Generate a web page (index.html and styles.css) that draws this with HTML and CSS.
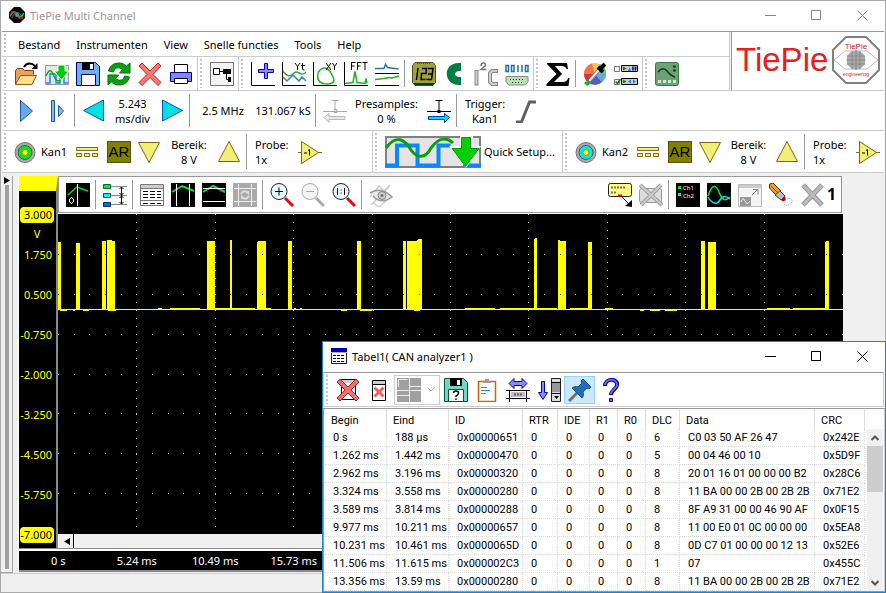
FILE: index.html
```
<!DOCTYPE html>
<html lang="nl">
<head>
    <meta charset="UTF-8">
    <title>TiePie Multi Channel</title>
    <link rel="stylesheet" href="styles.css">
</head>
<body>

<!-- icons that are used more than once -->
<svg class="defs" width="0" height="0">
    <symbol id="i-min" viewBox="0 0 11 11"><path d="M0 5.500h11" stroke="currentColor" fill="none"/></symbol>
    <symbol id="i-max" viewBox="0 0 11 11"><path d="M.5 .5h9v9h-9z" stroke="currentColor" fill="none"/></symbol>
    <symbol id="i-close" viewBox="0 0 11 11"><path d="M.5 .5l10 10M10.500 .5l-10 10" stroke="currentColor" fill="none"/></symbol>
    <symbol id="i-dc" viewBox="0 0 24 24"><path d="M.5 7.500h21v3h-21zM.5 13.500h5v3h-5zM8.500 13.500h5v3h-5zM16.500 13.500h5v3h-5z" fill="#f0f080" stroke="#8a6410"/></symbol>
    <symbol id="i-down" viewBox="0 0 24 24"><path d="M.5 2.500h21l-10.500 20z" fill="#f0f078" stroke="#8a6410"/></symbol>
    <symbol id="i-up" viewBox="0 0 24 24"><path d="M1.500 21.500h21l-10.500-20z" fill="#f0f078" stroke="#8a6410"/></symbol>
    <symbol id="i-gain" viewBox="0 0 24 24"><path d="M0 12.500h24" stroke="#8a6410"/><path d="M3.500 1.500v22l17-11z" fill="#f0f078" stroke="#8a6410"/><path d="M6 13h3M11.500 9.500v6M10 10.500l1.500-1" fill="none" stroke="#000"/></symbol>
</svg>

<div class="window">
    <div class="titlebar">
        <svg class="app_icon" viewBox="0 0 16 16"><path d="M5 0h6l5 5v6l-5 5h-6l-5-5v-6z"/><path d="M1 9c3-5 5-5 7-2s4 4 7-1" fill="none" stroke="#0c3" stroke-width="1.500"/><path d="M2 5h4l4 6h4" fill="none" stroke="#e22" stroke-width="1.500"/><path d="M3 11c2-6 7-8 10-1" fill="none" stroke="#09c"/><circle cx="8" cy="8" r="2" fill="#888"/></svg>
        <h1>TiePie Multi Channel</h1>
        <div class="controls">
            <button aria-label="Minimaliseren"><svg><use href="#i-min"/></svg></button>
            <button aria-label="Maximaliseren"><svg><use href="#i-max"/></svg></button>
            <button aria-label="Sluiten"><svg><use href="#i-close"/></svg></button>
        </div>
    </div>

    <div class="head">
        <div class="head_left">
            <div class="menu">
                <i class="grip"></i>
                <button>Bestand</button><button>Instrumenten</button><button>View</button><button>Snelle functies</button><button>Tools</button><button>Help</button>
            </div>

            <div class="bar bar_main">
                <div class="band">
                    <i class="grip"></i>
                    <button class="tool" aria-label="Openen"><svg viewBox="0 0 24 24"><path d="M1.500 22V8.500l2-2h5l2 2h9v4" fill="#e8a060" stroke="#804010"/><path d="M1.500 22.500l5-9h16l-4.500 9z" fill="#ffe090" stroke="#a05810"/><path d="M10 5c3-5 8-4 11-1" fill="none" stroke="#000" stroke-width="2"/><path d="M23.500 1v6h-6z"/></svg></button>
                    <button class="tool" aria-label="Snelle opstelling"><svg viewBox="0 0 24 24"><path d="M.5 3.500h23v19h-23z" fill="#e6e6e6" stroke="#999"/><path d="M1 21h4v-9h6v9h4v-6h4v6h4" fill="none" stroke="#1888ff" stroke-width="1.500"/><path d="M1 14c3-7 5-7 8 0s6 6 9 0" fill="none" stroke="#0a0" stroke-width="1.500"/><path d="M13 3h7v6h4l-7.500 9-7.500-9h4z" fill="#0c0" stroke="#fff"/></svg></button>
                    <button class="tool" aria-label="Opslaan"><svg viewBox="0 0 24 24"><path d="M.5 .5h19l4 4v19h-23z" fill="#6caef8" stroke="#000060"/><path d="M6 0h12v8h-12z"/><path d="M14 2h3v5h-3z" fill="#fff"/><path d="M5.500 12.500h14v11h-14z" fill="#fff" stroke="#000060"/></svg></button>
                    <button class="tool" aria-label="Vernieuwen"><svg viewBox="0 0 24 24"><g fill="#08a010" stroke="#067008"><path d="M1.500 9c2-9 13-10 18-5l3.500-3v10h-10.500l3-3.500c-4-3-8-2-9 2.500z"/><path d="M22.500 15c-2 9-13 10-18 5l-3.500 3v-10h10.500l-3 3.500c4 3 8 2 9-2.500z"/></g></svg></button>
                    <button class="tool" aria-label="Verwijderen"><svg viewBox="0 0 24 24"><path d="M4 1l8 8 8-8 3 3-8 8.500 8 8-3 3-8-8-8 8-3-3 8-8-8-8.500z" fill="#f87878" stroke="#c02020"/></svg></button>
                    <button class="tool" aria-label="Afdrukken"><svg viewBox="0 0 24 24"><path d="M5.500 2.500h13v8h-13z" fill="#fff" stroke="#000"/><path d="M1.500 10.500h21v9h-21z" fill="#8484f8" stroke="#000080"/><path d="M5.500 16.500h13v5h-13z" fill="#fff" stroke="#000"/></svg></button>
                </div>
                <div class="band">
                    <i class="grip"></i>
                    <button class="tool" aria-label="Objecten"><svg viewBox="0 0 24 24"><path d="M.5 .5h23v23h-23z" fill="#f4f4f4" stroke="#777"/><path d="M3.500 6.500h6v6h-6z" fill="#fff" stroke="#000"/><path d="M10 9.500h4M16.500 10v7.500h2" fill="none" stroke="#000"/><path d="M13 7h8v5h-8zM18 15h3v5h-3z"/></svg></button>
                </div>
                <div class="band">
                    <i class="grip"></i>
                    <button class="tool" aria-label="Nieuwe grafiek"><svg viewBox="0 0 24 24"><path d="M.5 0v23.500h23.500" fill="none" stroke="#000"/><path d="M13.500 1.500h3v6h6v3h-6v6h-3v-6h-6v-3h6z" fill="#88f" stroke="#00c"/></svg></button>
                    <button class="tool" aria-label="Yt grafiek"><svg viewBox="0 0 24 24"><path d="M.5 0v23.500h23.500" fill="none" stroke="#000"/><path d="M1 9c4 6 7 6 11 2s7 5 12-1" fill="none" stroke="#3a3" stroke-width="1.500"/><path d="M1 15l4 4 6-6 6 6 3-4 4 4" fill="none" stroke="#3a80d0" stroke-width="1.500"/><path d="M13 1l2.500 3.500L18 1M15.500 4v4M20.500 1v6q0 1 2 1M19 3.500h4" fill="none" stroke="#000"/></svg></button>
                    <button class="tool" aria-label="XY grafiek"><svg viewBox="0 0 24 24"><path d="M.5 0v23.500h23.500" fill="none" stroke="#000"/><path d="M7 8c5-4 9-1 11 3s5 8 1 10-11 1-13-2-2-8 1-11z" fill="none" stroke="#1cb41c" stroke-width="1.500"/><path d="M13 1l5 7M18 1l-5 7M19.500 1l2 3.500L24 1M21.500 4v4" fill="none" stroke="#000"/></svg></button>
                    <button class="tool" aria-label="FFT grafiek"><svg viewBox="0 0 24 24"><path d="M.5 0v23.500h23.500" fill="none" stroke="#000"/><path d="M1 21.500l8-1 2-11 2 11 8 1 1-5 1 5" fill="none" stroke="#1cb41c" stroke-width="1.500"/><path d="M7.500 8V.5h4M7.500 4h3M13.500 8V.5h4M13.500 4h3M18.500 .5h5M21 .5V8" fill="none" stroke="#000"/></svg></button>
                    <button class="tool" aria-label="Meerdere grafieken"><svg viewBox="0 0 24 24"><path d="M0 11.500h24M0 23.500h24" stroke="#000"/><path d="M0 6.500h9l1.500-4 2 3 11 1.500" fill="none" stroke="#2878b8" stroke-width="1.500"/><path d="M0 17.500l9-1 5-1 3 .5 7-2" fill="none" stroke="#1cb41c" stroke-width="1.500"/></svg></button>
                    <i class="sep"></i>
                    <button class="tool" aria-label="Meter"><svg viewBox="0 0 24 24"><path d="M3 .5h18l2.500 3v17l-2.500 3h-18l-2.500-3v-17z" fill="#a0a03c" stroke="#505018"/><path d="M2 21h20v2h-20z" fill="#004020"/><path d="M5 1.500h14" stroke="#3848c0" stroke-dasharray="1 1"/><path d="M6 6l-1.500 12M10 6.500h4.500l-.5 5h-4.500l-.5 6h4.500M16 6.500h5l-1.500 11h-5M16 12h4" fill="none" stroke="#000" stroke-width="1.500"/></svg></button>
                    <button class="tool" aria-label="CAN"><svg viewBox="0 0 24 24"><path d="M18 1c-20-2-18 24 0 22v-8c-8 1-8-7 0-6z" fill="#007c48"/></svg></button>
                    <button class="tool" aria-label="I2C"><svg viewBox="0 0 24 24"><g fill="none"><path d="M2.500 8v15.500" stroke="#888" stroke-width="4"/><path d="M2.500 9v13.500" stroke="#ccc" stroke-width="2"/><path d="M24 9h-6l-2 2v9l2 2h6" stroke="#888" stroke-width="4"/><path d="M23 9h-5l-2 2v9l2 2h5" stroke="#ccc" stroke-width="2"/><path d="M7 4c0-4 5-4 4.500-.5L7 7.500h5.500" stroke="#777" stroke-width="1.500"/></g></svg></button>
                    <button class="tool" aria-label="Serieel"><svg viewBox="0 0 24 24"><g fill="none" stroke="#1870b0" stroke-width="1.500"><path d="M1 3.500h2.500v6H1zM6.500 3.500H9v6H6.500zM13 3v7M17 3v7M20.500 3.500H23v6h-2.500z"/></g><path d="M1 14.500h22v5l-2.500 3.500h-17l-2.500-3.500z" fill="#b8e0b0" stroke="#888"/><path d="M5 17.500h15M7 20.500h12" stroke="#222" stroke-dasharray="1 2"/></svg></button>
                </div>
                <div class="band">
                    <i class="grip"></i>
                    <button class="tool" aria-label="Som"><svg viewBox="0 0 24 24"><path d="M1 1h20l1 6h-1.500q-1-3-5-3h-6.500l7 8-8 8h8.500q5 0 5.500-4h1.500l-1 8h-22v-2l10-10-9.500-10z"/></svg></button>
                    <i class="sep"></i>
                    <button class="tool" aria-label="Kleuren"><svg viewBox="0 0 24 24"><circle cx="12" cy="12" r="11" fill="#e8c860"/><path d="M12 12L1 12A11 11 0 0 1 9 1.500z" fill="#f07848"/><path d="M12 12L1 12A11 11 0 0 0 6 21z" fill="#e03040"/><path d="M12 12L6 21A11 11 0 0 0 19 20z" fill="#5060c0"/><path d="M12 12l7 8a11 11 0 0 0 4-9z" fill="#60a8e0"/><path d="M12 12l11-1a11 11 0 0 0-6-9z" fill="#70c090"/><path d="M5 18l10-11 2 2-10 11z" fill="#eee" stroke="#777"/><path d="M15 5l5 5M17 7l5-5" stroke="#000" stroke-width="4"/><path d="M1 21l4-3 2 4-3 2z" fill="#00c020"/></svg></button>
                    <button class="tool" aria-label="Werkbalken"><svg viewBox="0 0 24 24"><path d="M.5 4.500h5v5h-5zM.5 17.500h5v5h-5z" fill="#fff" stroke="#777"/><path d="M7.500 3.500h16v6h-16zM7.500 16.500h16v6h-16z" fill="#ccc" stroke="#000"/><path d="M9 4.500l3.500 2L9 8.500zM9 17.500l3.500 2-3.500 2z" fill="#080"/><path d="M14 9l1.500-4L17 9M17 17.500v4l-3-2zM19 17.500v4l3-2z" fill="#1090e0"/><path d="M19 4.500v4M21.500 4.500v4" stroke="#00a" stroke-width="1.500"/><path d="M1.500 19.500l2 2 3-4.500" fill="none" stroke="#080" stroke-width="1.500"/></svg></button>
                </div>
                <div class="band band_fill">
                    <i class="grip"></i>
                    <button class="tool" aria-label="Oscilloscoop"><svg viewBox="0 0 24 24"><rect x=".5" y=".5" width="23" height="23" rx="2" fill="#70a078" stroke="#387848"/><path d="M3 10q5-6 9-1t8 6" fill="none" stroke="#103820" stroke-width="1.500"/><path d="M18 4.500h3M18 8.500h3" stroke="#183820" stroke-width="2"/><path d="M3 19.500h18" stroke="#c8f0c8" stroke-width="3" stroke-dasharray="3 2"/></svg></button>
                </div>
            </div>
        </div>

        <div class="logo">
            <span>TiePie</span>
            <svg viewBox="0 0 48 48"><path d="M14 1h20l13 13v20l-13 13h-20l-13-13v-20z" fill="#fff" stroke="#808080" stroke-width="2"/><path d="M2 24l11-9h22l11 9-11 9h-22z" fill="none" stroke="#bbb"/><circle cx="24" cy="24" r="9.500" fill="#aaa"/><path d="M15 20h18M15 24h18M15 28h18M20 15v18M24 14v20M28 15v18" stroke="#888"/><text x="24" y="13" font-size="8" text-anchor="middle" fill="#e02020">TiePie</text><text x="24" y="40" font-size="5" text-anchor="middle" fill="#e02020">engineering</text></svg>
        </div>
    </div>

    <!-- tijdbasis en trigger -->
    <div class="bar bar_time">
        <i class="grip"></i>
        <button class="tool" aria-label="Start"><svg viewBox="0 0 24 24"><path d="M6.500 1.500v21l12-10.500z" fill="#68a8e8" stroke="#1858a8"/></svg></button>
        <button class="tool" aria-label="Eenmalig"><svg viewBox="0 0 24 24"><path d="M6.500 1.500h3v21h-3zM13.500 6.500v11l5-5.500z" fill="#88b8e8" stroke="#1858a8"/></svg></button>
        <i class="sep"></i>
        <button class="tool" aria-label="Tijdbasis lager"><svg viewBox="0 0 24 24"><path d="M21.500 1v21l-20-10.500z" fill="#00e0e0" stroke="#1050c0"/></svg></button>
        <span class="label w47">5.243<br>ms/div</span>
        <button class="tool" aria-label="Tijdbasis hoger"><svg viewBox="0 0 24 24"><path d="M2.500 1v21l20-10.500z" fill="#00e0e0" stroke="#1050c0"/></svg></button>
        <i class="sep"></i>
        <span class="label w60">2.5 MHz</span>
        <span class="label w60">131.067 kS</span>
        <i class="sep"></i>
        <button class="tool" aria-label="Minder presamples" disabled><svg viewBox="0 0 24 24"><path d="M8.500 1.500h7M12 1.500v10M0 12.500h24M11 10.500h3v3h-3" stroke="#aaa" fill="none"/><path d="M1 18.500l5-4v3h16v3h-16v3z" fill="#e8e8e8" stroke="#bbb"/></svg></button>
        <span class="label w73">Presamples:<br>0 %</span>
        <button class="tool" aria-label="Meer presamples"><svg viewBox="0 0 24 24"><path d="M8.500 1.500h7M12 1.500v10M0 12.500h24" stroke="#000" fill="none"/><path d="M10.500 11h3v3h-3z"/><path d="M22.500 18.500l-5-4v3h-16v3h16v3z" fill="#00e0f0" stroke="#0040c0"/></svg></button>
        <i class="sep"></i>
        <span class="label w50">Trigger:<br>Kan1</span>
        <button class="tool" aria-label="Stijgende flank"><svg viewBox="0 0 24 24"><path d="M2 23h5.500l8-20h6.500" fill="none" stroke="#606060" stroke-width="3"/></svg></button>
    </div>

    <!-- kanalen -->
    <div class="bar bar_chan">
        <div class="band band_chan">
            <i class="grip"></i>
            <button class="tool" aria-label="Kanaal 1"><svg viewBox="0 0 24 24"><circle cx="11" cy="12.500" r="10" fill="#aaa" stroke="#777"/><circle cx="11" cy="12.500" r="7" fill="#00e818" stroke="#555"/><circle cx="11" cy="12.500" r="3" fill="#f8f020" stroke="#a09010"/></svg></button>
            <span class="label w31">Kan1</span>
            <button class="tool" aria-label="Koppeling"><svg><use href="#i-dc"/></svg></button>
            <button class="tool" aria-label="Auto bereik"><span class="auto">AR</span></button>
            <button class="tool" aria-label="Bereik lager"><svg><use href="#i-down"/></svg></button>
            <span class="label w48">Bereik:<br>8 V</span>
            <button class="tool" aria-label="Bereik hoger"><svg><use href="#i-up"/></svg></button>
            <i class="sep"></i>
            <span class="label label_probe">Probe:<br>1x</span>
            <button class="tool" aria-label="Inverteren"><svg><use href="#i-gain"/></svg></button>
        </div>
        <div class="band band_quick">
            <i class="grip"></i>
            <button class="quick">
                <svg viewBox="0 0 96 32"><path d="M1 1h94v30h-94z" fill="#e4e4e4" stroke="#808080" stroke-width="2"/><path d="M0 29.500h12v-20h20.500v20h21v-20h12M78 29.500h18" fill="none" stroke="#0888ff" stroke-width="4"/><path d="M1 12c8-11 16-11 23-1 6 10 15 14 22 1 8-11 16-11 22-5" fill="none" stroke="#08a008" stroke-width="3"/><path d="M75 0h13v10h8l-15 22-17-22h11z" fill="#fff"/><path d="M76.500 1.500h9v11h8.500l-13.500 18-13.500-18h9.500z" fill="#00d000" stroke="#089808"/></svg>
                Quick Setup...
            </button>
        </div>
        <div class="band band_fill">
            <i class="grip"></i>
            <button class="tool" aria-label="Kanaal 2"><svg viewBox="0 0 24 24"><circle cx="11" cy="12.500" r="10" fill="#aaa" stroke="#777"/><circle cx="11" cy="12.500" r="7" fill="#00e8f0" stroke="#555"/><circle cx="11" cy="12.500" r="3" fill="#f8f020" stroke="#a09010"/></svg></button>
            <span class="label w31">Kan2</span>
            <button class="tool" aria-label="Koppeling"><svg><use href="#i-dc"/></svg></button>
            <button class="tool" aria-label="Auto bereik"><span class="auto">AR</span></button>
            <button class="tool" aria-label="Bereik lager"><svg><use href="#i-down"/></svg></button>
            <span class="label w45">Bereik:<br>8 V</span>
            <button class="tool" aria-label="Bereik hoger"><svg><use href="#i-up"/></svg></button>
            <i class="sep"></i>
            <span class="label label_probe">Probe:<br>1x</span>
            <button class="tool" aria-label="Inverteren"><svg><use href="#i-gain"/></svg></button>
        </div>
    </div>

    <div class="work">
        <div class="side">
            <svg viewBox="0 0 6 7"><path d="M0 0v7l6-3.500z"/></svg>
            <i></i>
        </div>

        <div class="scope">
            <div class="scope_main">
                <div class="axis">
                    <b>3.000</b>
                    <em>V</em>
                    <span>1.750</span>
                    <span>0.500</span>
                    <span>-0.750</span>
                    <span>-2.000</span>
                    <span>-3.250</span>
                    <span>-4.500</span>
                    <span>-5.750</span>
                    <b>-7.000</b>
                </div>

                <div class="graph">
                    <div class="graph_bar">
                        <button class="tool" aria-label="Nulpunt"><svg viewBox="0 0 24 24"><path d="M0 0h24v24H0z"/><path d="M2 12l9-8 11 4" fill="none" stroke="#00e030" stroke-width="1.500"/><path d="M11.500 1v22" stroke="#fff"/><path d="M3.500 16q2-3 4 0v3q-2 3-4 0z" fill="none" stroke="#fff"/></svg></button>
                        <i class="sep"></i>
                        <button class="tool" aria-label="Assen"><svg viewBox="0 0 24 24"><path d="M8 3.500h16M8 12.500h16M8 21.500h16" stroke="#888"/><path d="M18.500 4v17M16.500 6l2-2 2 2M16.500 10l2 2 2-2M16.500 15l2-2 2 2M16.500 19l2 2 2-2" fill="none" stroke="#000"/><path d="M.5 1.500h7v4h-7z" fill="#00f020" stroke="#063"/><path d="M.5 10.500h7v4h-7z" fill="#00f8f8" stroke="#055"/><path d="M.5 19.500h7v4h-7z" fill="#0868e0" stroke="#036"/></svg></button>
                        <i class="sep"></i>
                        <button class="tool" aria-label="Tabel"><svg viewBox="0 0 24 24"><path d="M.5 1.500h23v21h-23z" fill="#fff" stroke="#777"/><path d="M1 2h22v3H1z" fill="#ccc"/><path d="M1 5.500h22M1 17.500h22" stroke="#777"/><path d="M3 8.500h18M3 11.500h18M3 14.500h18M3 20.500h18" stroke="#000" stroke-dasharray="5 2"/></svg></button>
                        <button class="tool" aria-label="Verticale cursors"><svg viewBox="0 0 24 24"><path d="M0 0h24v24H0z"/><path d="M1 9l10-6 12 5" fill="none" stroke="#00e030" stroke-width="2"/><path d="M5.500 1v22M18.500 1v22" stroke="#fff"/></svg></button>
                        <button class="tool" aria-label="Horizontale cursors"><svg viewBox="0 0 24 24"><path d="M0 0h24v24H0z"/><path d="M1 9l10-6 12 6" fill="none" stroke="#00e030" stroke-width="2"/><path d="M1 5.500h22M1 18.500h22" stroke="#fff"/></svg></button>
                        <button class="tool" aria-label="Cursors herstellen" disabled><svg viewBox="0 0 24 24"><path d="M0 0h24v24H0z" fill="#aaa"/><path d="M5.500 1v22M18.500 1v22M1 5.500h22M1 18.500h22" stroke="#eee"/><path d="M8 11q3-5 7-1v-2M16 13q-3 5-7 1v2" fill="none" stroke="#ddd" stroke-width="2"/></svg></button>
                        <i class="sep"></i>
                        <button class="tool" aria-label="Inzoomen"><svg viewBox="0 0 24 24"><path d="M15 15l8 8" stroke="#f00000" stroke-width="3"/><circle cx="9" cy="8.500" r="8" fill="#e8f8f8" stroke="#222"/><path d="M5 8.500h8M9 4.500v8" stroke="#000"/></svg></button>
                        <button class="tool" aria-label="Uitzoomen" disabled><svg viewBox="0 0 24 24"><path d="M15 15l8 8" stroke="#aaa" stroke-width="3"/><circle cx="9" cy="8.500" r="8" fill="#f4f4f4" stroke="#aaa"/><path d="M5 8.500h8" stroke="#aaa"/></svg></button>
                        <button class="tool" aria-label="Zoom 1:1"><svg viewBox="0 0 24 24"><path d="M15 15l8 8" stroke="#f00000" stroke-width="3"/><circle cx="9" cy="8.500" r="8" fill="#e8f8f8" stroke="#222"/><path d="M5.500 5v7M12.500 5v7" stroke="#000"/><path d="M9 6.500v1M9 9.500v1" stroke="#000"/></svg></button>
                        <i class="sep"></i>
                        <button class="tool" aria-label="Weergave" disabled><svg viewBox="0 0 24 24"><path d="M1 14l9-11 5 5 6-6M2 22l18-18M4 20l6 4 12-11" fill="none" stroke="#ccc" stroke-width="1.500"/><path d="M1 10q11-7 22 4-11 8-19-1" fill="#e8e8e8" stroke="#999" stroke-width="1.500"/><circle cx="13" cy="12.500" r="4" fill="#ccc" stroke="#888"/><circle cx="13" cy="12.500" r="1.500" fill="#777"/></svg></button>
                        <button class="tool tool_right" aria-label="Commentaar"><svg viewBox="0 0 24 24"><rect x=".5" y=".5" width="23" height="13" rx="2" fill="#ffff80" stroke="#222"/><path d="M3 4.500h14M3 9.500h6" stroke="#777" stroke-width="2" stroke-dasharray="2 1"/><path d="M10 12.500h4" stroke="#f00" stroke-width="2"/><path d="M14 14l7 7" stroke="#000"/><path d="M24 24v-7l-7 6z"/></svg></button>
                        <button class="tool" aria-label="Commentaar wissen" disabled><svg viewBox="0 0 24 24"><rect x=".5" y="5.500" width="22" height="14" rx="2" fill="#ddd" stroke="#999"/><path d="M1 2l22 20M22 2L2 22" stroke="#a0a0a0" stroke-width="4"/><path d="M1 2l22 20M22 2L2 22" stroke="#ccc" stroke-width="2"/></svg></button>
                        <i class="sep"></i>
                        <button class="tool" aria-label="Legenda"><svg viewBox="0 0 24 24"><path d="M0 0h24v24H0z"/><path d="M2 3h3v3H2z" fill="#00e030"/><path d="M2 10h3v3H2z" fill="#00e0f0"/><text x="7" y="7" font-size="6" fill="#fff">Ch1</text><text x="7" y="15" font-size="6" fill="#fff">Ch2</text></svg></button>
                        <button class="tool" aria-label="Signalen"><svg viewBox="0 0 24 24"><path d="M0 0h24v24H0z"/><path d="M1 13C5 1 9 1 12 9s6 10 11 5" fill="none" stroke="#00f020" stroke-width="1.500"/><path d="M1 14c4 7 9 8 12 3s6-4 10-1" fill="none" stroke="#00e0f0" stroke-width="1.500"/></svg></button>
                        <button class="tool" aria-label="Losmaken" disabled><svg viewBox="0 0 24 24"><path d="M.5 1.500h23v22h-23z" fill="#f4f4f4" stroke="#bbb"/><path d="M1 3.500h22" stroke="#ccc" stroke-width="3"/><path d="M2 14h11v9H2z" fill="#999"/><path d="M3 19q2-6 4-1t5 0" fill="none" stroke="#eee"/><path d="M14 12l5-5M15 6.500h5v5" fill="none" stroke="#888"/></svg></button>
                        <button class="tool" aria-label="Wissen"><svg viewBox="0 0 24 24"><path d="M.5 1l3.500-1 8 8-5 4-6.500-7z" fill="#f0a020" stroke="#503000"/><path d="M2 3l7 7" stroke="#804800"/><path d="M6 12l5-4 5 5-4 4z" fill="#bbb" stroke="#444"/><path d="M12 17l4-4 1 4-3 1.500z" fill="#c00000"/><path d="M16 17c5-3 8-1 7 2s-8 5-8 1" fill="none" stroke="#999" stroke-dasharray="1 1"/></svg></button>
                        <button class="tool" aria-label="Verwijderen" disabled><svg viewBox="0 0 24 24"><path d="M3 2l19 20M22 2L3 22" stroke="#999" stroke-width="5"/><path d="M3.500 2.500l18 19M21.500 2.500l-18 19" stroke="#bbb" stroke-width="3"/></svg></button>
                        <strong>1</strong>
                    </div>

                    <svg class="plot" viewBox="58 214 785 320" preserveAspectRatio="none" shape-rendering="crispEdges">
                        <g fill="#ffff00">
                            <path d="M58 309h785v1h-785z"/>
                            <path d="M58 242h3v67h-3zM76 243h4v66h-4zM102 241h4v68h-4zM107 240h5v1h3v68h-8zM207 241h8v68h-8zM230 240h2v69h-2zM257 242h1v-1h8v68h-9zM288 241h4v68h-4z"/>
                            <path d="M357 241h4v68h-4zM403 241h3v68h-3zM407 241h10v-1h1v-1h4v70h-15zM534 239h1v-1h2v71h-3zM558 240h2v1h6v68h-8zM588 242h4v67h-4z"/>
                            <path d="M701 241h4v68h-4zM708 242h8v67h-8zM825 242h1v-1h3v68h-4z"/>
                            <path d="M60 310h7v1h-7zM73 310h2v1h-2zM83 310h6v1h-6zM108 310h8v1h-8zM341 310h6v1h-6zM360 310h14v1h-14zM414 310h6v1h-6zM640 310h4v1h-4zM650 310h10v1h-10zM665 310h12v1h-12z"/>
                            <path d="M158 308h4v1h-4zM170 308h30v1h-30zM215 308h40v1h-40zM266 308h5v1h-5zM294 308h2v1h-2zM300 308h2v1h-2zM465 308h30v1h-30zM500 308h35v1h-35zM537 308h20v1h-20zM570 308h18v1h-18zM605 308h8v1h-8zM767 308h23v1h-23zM793 308h36v1h-36z"/>
                        </g>
                        <g class="dots">
                            <path stroke-dasharray="1 7" d="M136.500 214v320M215.500 214v320M293.500 214v320M372.500 214v320M450.500 214v320M528.500 214v320M607.500 214v320M685.500 214v320M764.500 214v320"/>
                            <path stroke-dasharray="1 14.680" d="M58 254.500h785M58 294.500h785M58 334.500h785M58 374.500h785M58 413.500h785M58 453.500h785M58 493.500h785"/>
                        </g>
                    </svg>

                    <div class="hscroll">
                        <button aria-label="Naar links"><svg viewBox="0 0 6 7"><path d="M6 0v7l-6-3.500z"/></svg></button>
                        <i></i>
                    </div>
                </div>
            </div>

            <div class="time">
                <span>0 s</span>
                <span>5.24 ms</span>
                <span>10.49 ms</span>
                <span>15.73 ms</span>
            </div>
        </div>
    </div>

    <div class="status"></div>
</div>

<!-- los venster met de CAN tabel -->
<div class="can">
    <div class="titlebar">
        <svg class="app_icon" viewBox="0 0 16 16"><path d="M.5 .5h15v15h-15z" fill="#fff" stroke="#222"/><path d="M0 0h16v4H0z" fill="#0000b0"/><path d="M0 4.500h16" stroke="#aaa"/><path d="M2 7.500h12M2 10.500h12M2 13.500h12" stroke="#000" stroke-dasharray="3 1"/></svg>
        <h2>Tabel1( CAN analyzer1 )</h2>
        <div class="controls">
            <button aria-label="Minimaliseren"><svg><use href="#i-min"/></svg></button>
            <button aria-label="Maximaliseren"><svg><use href="#i-max"/></svg></button>
            <button aria-label="Sluiten"><svg><use href="#i-close"/></svg></button>
        </div>
    </div>

    <div class="can_bar">
        <i class="grip"></i>
        <button class="tool" aria-label="Tabel verwijderen"><svg viewBox="0 0 24 24"><path d="M5.500 1.500h14v20h-14z" fill="#fff" stroke="#000"/><path d="M6 2h13v3H6z" fill="#ccc"/><path d="M4 1l8 8 8-8 3 3-8 8 8 8-3 3-8-8-8 8-3-3 8-8-8-8z" fill="#f07070" stroke="#b02020"/></svg></button>
        <button class="tool" aria-label="Tabel leegmaken"><svg viewBox="0 0 24 24"><path d="M5.500 2.500h13v20h-13z" fill="#fff" stroke="#000"/><path d="M6 3h12v3H6z" fill="#ccc"/><path d="M6 6.500h12" stroke="#000"/><path d="M7.500 9.500l9 9M16.500 9.500l-9 9" stroke="#f06060" stroke-width="3"/></svg></button>
        <button class="layout" aria-label="Indeling" disabled>
            <svg class="layout_icon" viewBox="0 0 24 24"><path d="M0 0h24v24H0z" fill="#a0a0a0"/><path d="M1.500 9V1.500h9M12.500 0v12M0 17.500h12.500M12.500 8.500h11M12.500 12v12M0 12.500h24" fill="none" stroke="#eee"/></svg>
            <svg class="layout_arrow" viewBox="0 0 8 5"><path d="M.5 .5l3.500 3.500 3.500-3.500" fill="none" stroke="#aaa"/></svg>
        </button>
        <button class="tool" aria-label="Opslaan als"><svg viewBox="0 0 24 24"><path d="M.5 .5h19l4 4v19h-23z" fill="#70d8c0" stroke="#105040"/><path d="M6 0h12v8h-12z"/><path d="M13 2h3v5h-3z" fill="#fff"/><path d="M4.500 11.500h15v12h-15z" fill="#fff" stroke="#105040"/><path d="M9.500 15q0-2 2.500-2t2.500 2-2.500 3v1M12 20.500v1.500" fill="none" stroke="#000" stroke-width="1.500"/></svg></button>
        <button class="tool" aria-label="Kopieren"><svg viewBox="0 0 24 24"><path d="M3.500 3.500h17v20h-17z" fill="#fff" stroke="#d86000" stroke-width="1.500"/><path d="M10 1h4v2h2v2H8V3h2z" fill="#999"/><path d="M6 9.500h6M6 12.500h9M6 15.500h5" stroke="#10a0e8"/></svg></button>
        <button class="tool" aria-label="Kolombreedte"><svg viewBox="0 0 24 24"><path d="M3 5.500l5-5v3h8v-3l5 5-5 5v-3H8v3z" fill="#8888ff" stroke="#0000b0"/><path d="M0 12.500h24M0 20.500h24M3.500 12v12M20.500 12v12" stroke="#000"/><path d="M5 14h14v5H5z" fill="#c0c0c0"/><path d="M8 16.500h8" stroke="#666" stroke-width="2" stroke-dasharray="2 1"/></svg></button>
        <button class="tool" aria-label="Automatisch scrollen"><svg viewBox="0 0 24 24"><path d="M4.500 3.500h3v11h3l-4.500 7-4.500-7h3z" fill="#8888ff" stroke="#0000b0"/><path d="M14.500 .5h9v23h-9z" fill="#ddd" stroke="#222"/><path d="M15 5h8v9h-8z" fill="#999"/><path d="M14 4.500h10M14 15.500h10" stroke="#000"/><path d="M17 18h5l-2.500 3z"/></svg></button>
        <button class="tool tool_on" aria-label="Vastzetten" aria-pressed="true"><svg viewBox="0 0 24 24"><path d="M10 14l-9 9" stroke="#707070" stroke-width="3"/><path d="M15 1l8 8-2 2-2-1-4 4c1 3 0 5-1 6l-10-10c2-1 4-2 6-1l4-4-1-2z" fill="#2070b8" stroke="#185080"/></svg></button>
        <button class="tool" aria-label="Help"><svg viewBox="0 0 24 24"><path d="M6 8c0-8 13-8 12-1 0 4-6 5-6 10" fill="none" stroke="#0000a0" stroke-width="4"/><path d="M6 7c1-7 12-7 12 0 0 4-6 4-6 9" fill="none" stroke="#6868f0" stroke-width="2"/><path d="M10.500 20.500h3v3h-3z" fill="#6868f0" stroke="#0000a0"/></svg></button>
    </div>

    <div class="can_body">
        <table>
            <colgroup>
                <col class="c62"><col class="c62"><col class="c74"><col class="c35"><col class="c32"><col class="c28"><col class="c28"><col class="c34"><col class="c135"><col class="c50">
            </colgroup>
            <thead>
                <tr><th>Begin</th><th>Eind</th><th>ID</th><th>RTR</th><th>IDE</th><th>R1</th><th>R0</th><th>DLC</th><th>Data</th><th>CRC</th></tr>
            </thead>
            <tbody>
                <tr><td>0 s</td><td>188 µs</td><td>0x00000651</td><td>0</td><td>0</td><td>0</td><td>0</td><td>6</td><td>C0 03 50 AF 26 47</td><td>0x242E</td></tr>
                <tr><td>1.262 ms</td><td>1.442 ms</td><td>0x00000470</td><td>0</td><td>0</td><td>0</td><td>0</td><td>5</td><td>00 04 46 00 10</td><td>0x5D9F</td></tr>
                <tr><td>2.962 ms</td><td>3.196 ms</td><td>0x00000320</td><td>0</td><td>0</td><td>0</td><td>0</td><td>8</td><td>20 01 16 01 00 00 00 B2</td><td>0x28C6</td></tr>
                <tr><td>3.324 ms</td><td>3.558 ms</td><td>0x00000280</td><td>0</td><td>0</td><td>0</td><td>0</td><td>8</td><td>11 BA 00 00 2B 00 2B 2B</td><td>0x71E2</td></tr>
                <tr><td>3.589 ms</td><td>3.814 ms</td><td>0x00000288</td><td>0</td><td>0</td><td>0</td><td>0</td><td>8</td><td>8F A9 31 00 00 46 90 AF</td><td>0x0F15</td></tr>
                <tr><td>9.977 ms</td><td>10.211 ms</td><td>0x00000657</td><td>0</td><td>0</td><td>0</td><td>0</td><td>8</td><td>11 00 E0 01 0C 00 00 00</td><td>0x5EA8</td></tr>
                <tr><td>10.231 ms</td><td>10.461 ms</td><td>0x0000065D</td><td>0</td><td>0</td><td>0</td><td>0</td><td>8</td><td>0D C7 01 00 00 00 12 13</td><td>0x52E6</td></tr>
                <tr><td>11.506 ms</td><td>11.615 ms</td><td>0x000002C3</td><td>0</td><td>0</td><td>0</td><td>0</td><td>1</td><td>07</td><td>0x455C</td></tr>
                <tr><td>13.356 ms</td><td>13.59 ms</td><td>0x00000280</td><td>0</td><td>0</td><td>0</td><td>0</td><td>8</td><td>11 BA 00 00 2B 00 2B 2B</td><td>0x71E2</td></tr>
            </tbody>
        </table>
        <div class="vscroll">
            <button aria-label="Omhoog"><svg viewBox="0 0 8 6"><path d="M.5 5l3.500-3.500 3.500 3.500" fill="none" stroke="#555" stroke-width="2"/></svg></button>
            <i></i>
            <button aria-label="Omlaag"><svg viewBox="0 0 8 6"><path d="M.5 1l3.500 3.500 3.500-3.500" fill="none" stroke="#555" stroke-width="2"/></svg></button>
        </div>
    </div>
</div>

</body>
</html>
```
FILE: styles.css
```
* {
    margin: 0;
    padding: 0;
    box-sizing: border-box;
}

body {
    position: relative;
    font-family: "Noto Sans", "Open Sans", sans-serif;
    font-size: 11px;
    line-height: 15px;
    color: #000;
    background: #f0f0f0;
    overflow: hidden;
}

button {
    font: inherit;
    color: inherit;
    background: none;
    border: 0;
}

svg {
    display: block;
}

.defs {
    position: absolute;
}

.window {
    display: flex;
    flex-direction: column;
    height: 100vh;
    border: 1px solid #aaa;
}

/* titelbalk */
.titlebar {
    display: flex;
    align-items: center;
    height: 30px;
    padding: 0 0 2px 8px;
    background: #fff;
    flex: none;
}

.titlebar h1, .titlebar h2 {
    flex: 1;
    font-size: 11px;
    font-weight: normal;
    padding-left: 5px;
}

.titlebar h1 {
    color: #999;
}

.app_icon {
    width: 16px;
    height: 16px;
}

.controls {
    display: flex;
    color: #888;
}

.controls button {
    width: 46px;
    height: 28px;
    padding-left: 18px;
}

.controls svg {
    width: 11px;
    height: 11px;
}

/* werkbalken */
.head {
    display: flex;
    flex: none;
    border-top: 1px solid #999;
    margin: 0 1px;
}

.head_left {
    flex: 1;
    border-right: 1px solid #ccc;
}

.menu {
    display: flex;
    align-items: center;
    height: 25px;
    padding-left: 2px;
    background: #fff;
    border-bottom: 1px solid #ccc;
}

.menu button {
    padding: 0 8px;
}

.grip {
    flex: none;
    align-self: stretch;
    width: 2px;
    margin: 2px 4px 2px 0;
    background: repeating-linear-gradient(#c4c4c4 0 2px, transparent 2px 4px);
}

.bar {
    display: flex;
    align-items: center;
    background: #fff;
    border-bottom: 1px solid #ccc;
    flex: none;
}

.bar_main {
    height: 34px;
}

.bar_time {
    height: 40px;
    padding-left: 2px;
    margin: 0 1px;
}

.bar_chan {
    height: 42px;
    margin: 0 1px;
}

.band {
    display: flex;
    align-items: center;
    align-self: stretch;
    padding: 0 1px 0 2px;
    border-right: 1px solid #ccc;
    flex: none;
}

.band_fill {
    flex: 1;
    border-right: 0;
}

.band_chan {
    width: 371px;
}

.band_quick {
    width: 190px;
}

.tool {
    flex: none;
    width: 31px;
    height: 28px;
    padding: 2px 3px 2px 4px;
}

.tool svg {
    width: 24px;
    height: 24px;
}

.tool_on {
    background: #cce8ff;
    border: 1px solid #99d1ff;
    padding: 1px 2px 1px 3px;
}

.auto {
    display: block;
    width: 24px;
    height: 22px;
    font: 15px/20px "Liberation Sans", sans-serif;
    background: #808000;
    border: 1px solid #550;
}

.sep {
    flex: none;
    align-self: stretch;
    width: 1px;
    margin: 3px 3px 3px 2px;
    background: #999;
}

.label {
    flex: none;
    text-align: center;
}

.w31 { width: 31px; text-align: left; }
.w45 { width: 45px; }
.w47 { width: 47px; }
.w48 { width: 48px; }
.w50 { width: 50px; }
.w60 { width: 60px; }
.w73 { width: 73px; }

.label_probe {
    width: 44px;
    padding-left: 5px;
    text-align: left;
}

.quick {
    display: flex;
    align-items: center;
    gap: 3px;
    padding-left: 4px;
    white-space: nowrap;
}

.quick svg {
    width: 96px;
    height: 32px;
}

/* logo */
.logo {
    display: flex;
    align-items: center;
    width: 153px;
    margin-left: 1px;
    padding: 0 0 2px 4px;
    background: #fff;
    border-left: 1px solid #999;
    border-bottom: 1px solid #ccc;
}

.logo span {
    width: 96px;
    font: 33px/50px "Liberation Sans", sans-serif;
    color: #e52020;
}

.logo svg {
    width: 48px;
    height: 48px;
    font-family: "Liberation Sans", sans-serif;
}

/* werkgebied */
.work {
    display: flex;
    flex: 1;
    min-height: 0;
    padding-top: 3px;
}

.side {
    display: flex;
    flex-direction: column;
    align-items: center;
    width: 12px;
    padding: 1px 3px 3px 4px;
    border-right: 1px solid #a0a0a0;
    border-bottom: 1px solid #a0a0a0;
}

.side svg {
    width: 6px;
    height: 7px;
    margin-bottom: 1px;
    flex: none;
}

.side i {
    flex: 1;
    width: 4px;
    background: #a0a0a0;
}

.scope {
    flex: 1;
    display: flex;
    flex-direction: column;
    margin: 0 42px 1px 5px;
    border-left: 1px solid #fff;
}

.scope_main {
    flex: 1;
    display: flex;
    min-height: 0;
}

.axis {
    width: 39px;
    padding: 16px 2px 5px 1px;
    display: flex;
    flex-direction: column;
    background: #000;
    border-top: 15px solid #ff0;
    border-right: 2px solid #888;
    border-bottom: 1px solid #888;
    color: #ff0;
    text-align: right;
}

.axis span, .axis b {
    height: 16px;
    margin-bottom: 24px;
    padding-right: 2px;
    font-weight: normal;
    line-height: 16px;
}

.axis b {
    color: #000;
    background: #ff0;
    border-radius: 4px;
}

.axis b:first-child, .axis b:last-child {
    margin-bottom: 0;
}

.axis em {
    height: 24px;
    font-style: normal;
    line-height: 22px;
    text-align: center;
}

.graph {
    flex: 1;
    display: flex;
    flex-direction: column;
    min-width: 0;
}

.graph_bar {
    display: flex;
    align-items: center;
    flex: none;
    height: 37px;
    margin-right: 1px;
    padding: 0 4px 0 3px;
    background: #fff;
    border: 1px solid #999;
}

.tool_right {
    margin-left: auto;
}

.graph_bar strong {
    width: 10px;
    font-size: 16px;
}

.plot {
    flex: 1;
    width: 100%;
    min-height: 0;
    background: #000;
    border-top: 1px solid #fff;
    isolation: isolate;
}

.dots {
    fill: none;
    stroke: #c0c0c0;
    mix-blend-mode: difference;
}

.hscroll {
    display: flex;
    flex: none;
    height: 15px;
    border-bottom: 1px solid #888;
}

.hscroll button {
    width: 16px;
    padding: 0 5px;
    border-left: 1px solid #fff;
    border-right: 1px solid #000;
}

.hscroll svg {
    width: 6px;
    height: 7px;
}

.hscroll i {
    flex: 1;
    border-left: 1px solid #fff;
}

.time {
    display: flex;
    flex: none;
    height: 23px;
    padding-right: 39px;
    color: #fff;
    line-height: 20px;
    background: #000;
    border-top: 2px solid #fff;
    border-bottom: 2px solid #888;
}

.time span {
    flex: 0 0 10%;
    text-align: center;
}

.status {
    flex: none;
    height: 19px;
    border-top: 1px solid #ccc;
}

/* CAN venster */
.can {
    position: absolute;
    top: 341px;
    right: 0;
    bottom: 0;
    left: 322px;
    display: flex;
    flex-direction: column;
    background: #fff;
    border: 1px solid #1883d7;
}

.can .controls {
    color: #000;
}

.can_bar {
    display: flex;
    align-items: center;
    flex: none;
    height: 35px;
    margin-right: 1px;
    padding-left: 2px;
    border: 1px solid #ccc;
    border-top-color: #999;
}

.layout {
    display: flex;
    align-items: center;
    gap: 6px;
    width: 46px;
    height: 30px;
    padding-left: 2px;
    border: 1px solid #ccc;
}

.layout_icon {
    width: 24px;
    height: 24px;
}

.layout_arrow {
    width: 8px;
    height: 5px;
}

.can_body {
    display: flex;
    flex: 1;
    min-height: 0;
    margin-top: 1px;
    padding: 0 1px 0 1px;
    border: 1px solid #999;
    border-right-color: #ccc;
}

.can table {
    width: 540px;
    height: 182px;
    table-layout: fixed;
    border-collapse: separate;
    border-spacing: 0;
    font-family: Roboto, "Liberation Sans", sans-serif;
    line-height: 17px;
}

.c28 { width: 28px; }
.c32 { width: 32px; }
.c34 { width: 34px; }
.c35 { width: 35px; }
.c50 { width: 50px; }
.c62 { width: 62px; }
.c74 { width: 74px; }
.c135 { width: 135px; }

.can th {
    height: 20px;
    padding: 2px 0 0 6px;
    font-weight: normal;
    text-align: left;
    border-right: 1px solid #ddd;
}

.can td {
    height: 18px;
    padding-left: 8px;
    white-space: nowrap;
    border-right: 1px dotted #ddd;
    border-bottom: 1px dotted #ddd;
}

.vscroll {
    display: flex;
    flex-direction: column;
    width: 16px;
    margin: 20px 0 0 auto;
    background: #f0f0f0;
}

.vscroll button {
    height: 17px;
    padding-left: 4px;
}

.vscroll button:last-child {
    margin-top: auto;
}

.vscroll svg {
    width: 8px;
    height: 6px;
}

.vscroll i {
    height: 46px;
    background: #cdcdcd;
}
```
